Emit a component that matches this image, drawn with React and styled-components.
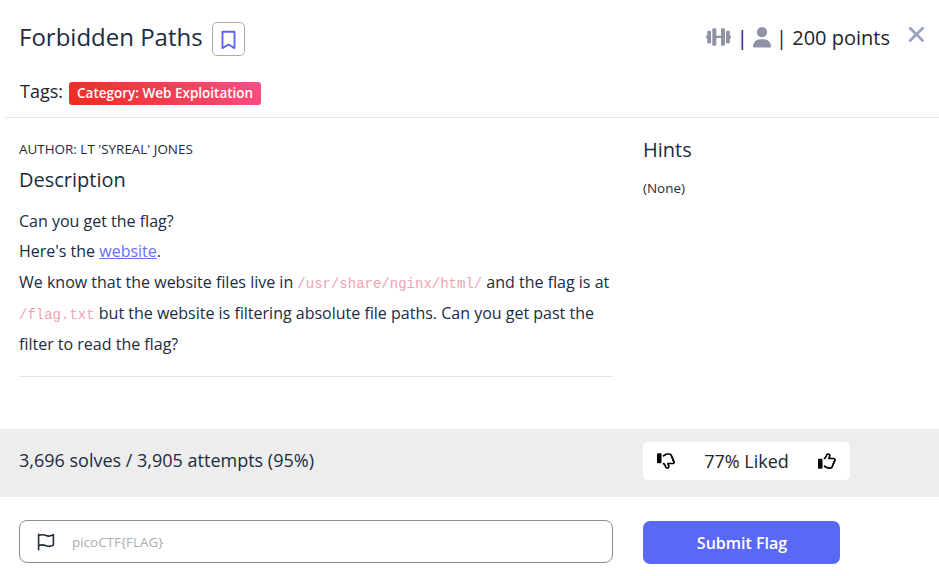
import React from "react";
import styled, { createGlobalStyle, css } from "styled-components";
import { FaUser } from "react-icons/fa6";

const GlobalStyle = createGlobalStyle`
  *, *::before, *::after { box-sizing: border-box; }
  body { margin: 0; background: #fff; font-family: "Open Sans", sans-serif; color: #212b3f; }
  h1, h2, p { margin: 0; font-weight: 400; }
  button, input { font-family: inherit; }
`;
const Page = styled.main`
  width: 100%;
  height: 576px;
  display: flex;
  flex-direction: column;
  overflow: hidden;
`;
const Header = styled.header`
  height: 118px;
  margin-left: 5px;
  padding: 20px 11px 0 14px;
  border-bottom: 1px solid #e7e7ea;
`;
const TitleRow = styled.div`
  display: flex;
  align-items: flex-start;
`;
const Title = styled.h1`
  font-size: 24px;
  line-height: 34px;
`;
const BookmarkButton = styled.button`
  width: 33px;
  height: 34px;
  margin: 2px 0 0 9px;
  padding: 1px 0 0;
  display: grid;
  place-items: center;
  border: 1px solid #a9a9b3;
  border-radius: 5px;
  background: #fff;
  color: #5b68f6;
`;
const Points = styled.div`
  margin: 1px 0 0 auto;
  display: flex;
  font-size: 20px;
  line-height: 34px;
  color: #212529;
  white-space: pre;
`;
const DumbbellSvg = styled.svg`
  width: 25px;
  height: 18px;
  margin-top: 7px;
  color: #8f92a3;
`;
const UserIcon = styled(FaUser)`
  width: 18px;
  height: 20.6px;
  margin-top: 6px;
  color: #8f92a3;
`;
const CloseButton = styled.button`
  margin: 6px 3px 0 18px;
  padding: 0;
  border: 0;
  background: none;
  color: #99a3c4;
  line-height: 0;
`;
const Tags = styled.div`
  margin: 21px 0 0 1px;
  display: flex;
  gap: 6px;
  font-size: 18px;
  line-height: 28px;
  color: #212529;
`;
const Tag = styled.span`
  height: 23px;
  margin-top: 5px;
  padding: 0 8px;
  border-radius: 3px;
  background: linear-gradient(45deg, #f02b1c, #fb5088);
  color: #fff;
  font-size: 13.5px;
  font-weight: 600;
  line-height: 22px;
`;
const Columns = styled.div`
  display: grid;
  grid-template-columns: 594px 1fr;
  column-gap: 30px;
  padding: 0 19px;
`;
const Content = styled(Columns)`
  height: 311px;
`;
const Details = styled.section`
  height: 259px;
  padding-top: 20px;
  border-bottom: 1px solid #e2e2e4;
`;
const Hints = styled.section`
  padding-top: 18px;
`;
const Heading = styled.h2`
  font-size: 20px;
  line-height: 28px;
`;
const Small = styled.p`
  font-size: 13.45px;
  line-height: 22px;
`;
const Author = styled(Small)`
  margin-bottom: 6px;
`;
const HintText = styled(Small)`
  margin-top: 13px;
`;
const Description = styled.div`
  margin-top: 11.6px;
  font-size: 16px;
  line-height: 30.8px;
  white-space: nowrap;
`;
const Link = styled.a`
  color: #6570f2;
  text-decoration: underline;
`;
const Code = styled.code`
  color: #f0a3b3;
  font-family: "Liberation Mono", monospace;
  font-size: 14px;
  line-height: 1;
`;
const StatsBar = styled(Columns)`
  height: 68px;
  flex: none;
  background: #ededed;
`;
const Solves = styled.p`
  font-size: 18px;
  line-height: 62px;
`;
const Rating = styled.div`
  width: 207px;
  height: 38px;
  margin-top: 13px;
  padding: 0 14px;
  display: flex;
  align-items: center;
  justify-content: space-between;
  border-radius: 5px;
  background: #fff;
  color: #212529;
  font-size: 18px;
`;
const ThumbSvg = styled.svg`
  width: 18px;
  height: 18px;
  color: #000;
  ${({ $down }) => $down && css`transform: scaleY(-1);`}
`;
const Submission = styled(Columns)`
  padding-top: 23px;
`;
const FlagField = styled.label`
  height: 43px;
  padding: 0 17px;
  display: flex;
  align-items: center;
  gap: 17px;
  border: 1px solid #8b8c91;
  border-radius: 8px;
`;
const FlagInput = styled.input`
  flex: 1;
  padding: 0;
  border: 0;
  outline: 0;
  font-size: 13.45px;
  &::placeholder { color: #acacb0; opacity: 1; }
`;
const SubmitButton = styled.button`
  width: 197px;
  height: 43px;
  margin-top: 1px;
  padding: 1px 5px 0 6px;
  border: 0;
  border-radius: 7px;
  background: #5a68f6;
  color: #fff;
  font-size: 16px;
  font-weight: 600;
`;

const Bookmark = () => (
  <svg width="15" height="20" viewBox="0 0 15 20" fill="none" stroke="currentColor" strokeWidth="1.9" strokeLinejoin="round">
    <path d="M1.5 1.7h12v16.4l-6-3.6-6 3.6z" />
  </svg>
);

const Dumbbell = () => (
  <DumbbellSvg viewBox="0 0 25 18" fill="currentColor">
    <rect x="0" y="7.5" width="3" height="3" rx="1" />
    <rect x="1.3" y="2.8" width="3.8" height="12.6" rx="1.2" />
    <rect x="6.3" y="0.3" width="4" height="17.4" rx="1.2" />
    <rect x="9.5" y="7.8" width="6" height="2.2" />
    <rect x="15" y="0.3" width="4" height="17.4" rx="1.2" />
    <rect x="20" y="2.8" width="3.8" height="12.6" rx="1.2" />
    <rect x="22" y="7.5" width="3" height="3" rx="1" />
  </DumbbellSvg>
);

const Close = () => (
  <svg width="17" height="17" viewBox="0 0 17 17" fill="none" stroke="currentColor" strokeWidth="2.8" strokeLinecap="round">
    <path d="M2.2 2.2l12.4 12.4M14.6 2.2L2.2 14.6" />
  </svg>
);

const Flag = () => (
  <svg width="18" height="18" viewBox="0 0 18 18" fill="none" stroke="currentColor" strokeWidth="1.6" strokeLinecap="round" strokeLinejoin="round">
    <path d="M1.6 1.2v15.6M1.6 2.6C4.5 1.4 6.7 1.6 9 2.6S13.5 3.3 16.4 1.6V12.1c-2.9 1.7-5.1 1.6-7.4.6s-4.5-1.2-7.4 0" />
  </svg>
);

const Thumb = ({ down }) => (
  <ThumbSvg $down={down} viewBox="0 0 512 512" fill="currentColor">
    <path d="M96 191.1H32c-17.67 0-32 14.33-32 31.1v223.1c0 17.67 14.33 31.1 32 31.1h64c17.67 0 32-14.33 32-31.1V223.1C128 205.4 113.7 191.1 96 191.1z" />
    <path d="M512 227c0-36.89-30.05-66.92-66.97-66.92h-99.86C354.7 135.1 360 113.5 360 100.8c0-33.8-26.2-68.78-70.06-68.78c-46.61 0-59.36 32.44-69.61 58.5c-31.66 80.5-60.33 66.39-60.33 93.47c0 12.84 10.36 23.99 24.02 23.99c5.256 0 10.55-1.721 14.97-5.26c76.76-61.37 57.97-122.7 90.95-122.7c16.08 0 22.06 12.75 22.06 20.79c0 7.404-7.594 39.55-25.55 71.59c-2.046 3.646-3.066 7.686-3.066 11.72c0 13.92 11.43 23.1 24 23.1h137.6C455.5 208.1 464 216.6 464 227c0 9.809-7.766 18.03-17.67 18.71c-12.66 .8593-22.36 11.4-22.36 23.94c0 15.47 11.39 15.95 11.39 28.91c0 25.37-35.03 12.34-35.03 42.15c0 11.22 6.392 13.03 6.392 22.25c0 22.66-29.77 13.76-29.77 40.64c0 4.515 1.11 5.961 1.11 9.456c0 10.45-8.516 18.95-18.97 18.95h-52.53c-25.62 0-51.02-8.466-71.5-23.81l-36.66-27.51c-4.315-3.245-9.37-4.811-14.38-4.811c-13.85 0-24.03 11.38-24.03 24.04c0 7.287 3.312 14.42 9.596 19.13l36.67 27.52C235 468.1 270.6 480 306.6 480h52.53c35.33 0 64.36-27.49 66.8-62.2c17.77-12.23 28.83-32.51 28.83-54.83c0-3.046-.2187-6.107-.6406-9.122c17.84-12.15 29.28-32.58 29.28-55.28c0-5.311-.6406-10.54-1.875-15.64C499.9 270.1 512 250.2 512 227z" />
  </ThumbSvg>
);

export default function App() {
  return (
    <Page>
      <GlobalStyle />
      <Header>
        <TitleRow>
          <Title>Forbidden Paths</Title>
          <BookmarkButton aria-label="Bookmark"><Bookmark /></BookmarkButton>
          <Points><Dumbbell /> | <UserIcon /> | 200 points</Points>
          <CloseButton aria-label="Close"><Close /></CloseButton>
        </TitleRow>
        <Tags>Tags: <Tag>Category: Web Exploitation</Tag></Tags>
      </Header>
      <Content>
        <Details>
          <Author>AUTHOR: LT 'SYREAL' JONES</Author>
          <Heading>Description</Heading>
          <Description>
            <p>Can you get the flag?</p>
            <p>Here's the <Link href="#">website</Link>.</p>
            <p>
              We know that the website files live in <Code>/usr/share/nginx/html/</Code> and the flag is at<br />
              <Code>/flag.txt</Code> but the website is filtering absolute file paths. Can you get past the<br />
              filter to read the flag?
            </p>
          </Description>
        </Details>
        <Hints>
          <Heading>Hints</Heading>
          <HintText>(None)</HintText>
        </Hints>
      </Content>
      <StatsBar>
        <Solves>3,696 solves / 3,905 attempts (95%)</Solves>
        <Rating><Thumb down /><span>77% Liked</span><Thumb /></Rating>
      </StatsBar>
      <Submission>
        <FlagField><Flag /><FlagInput placeholder="picoCTF{FLAG}" /></FlagField>
        <SubmitButton>Submit Flag</SubmitButton>
      </Submission>
    </Page>
  );
}
